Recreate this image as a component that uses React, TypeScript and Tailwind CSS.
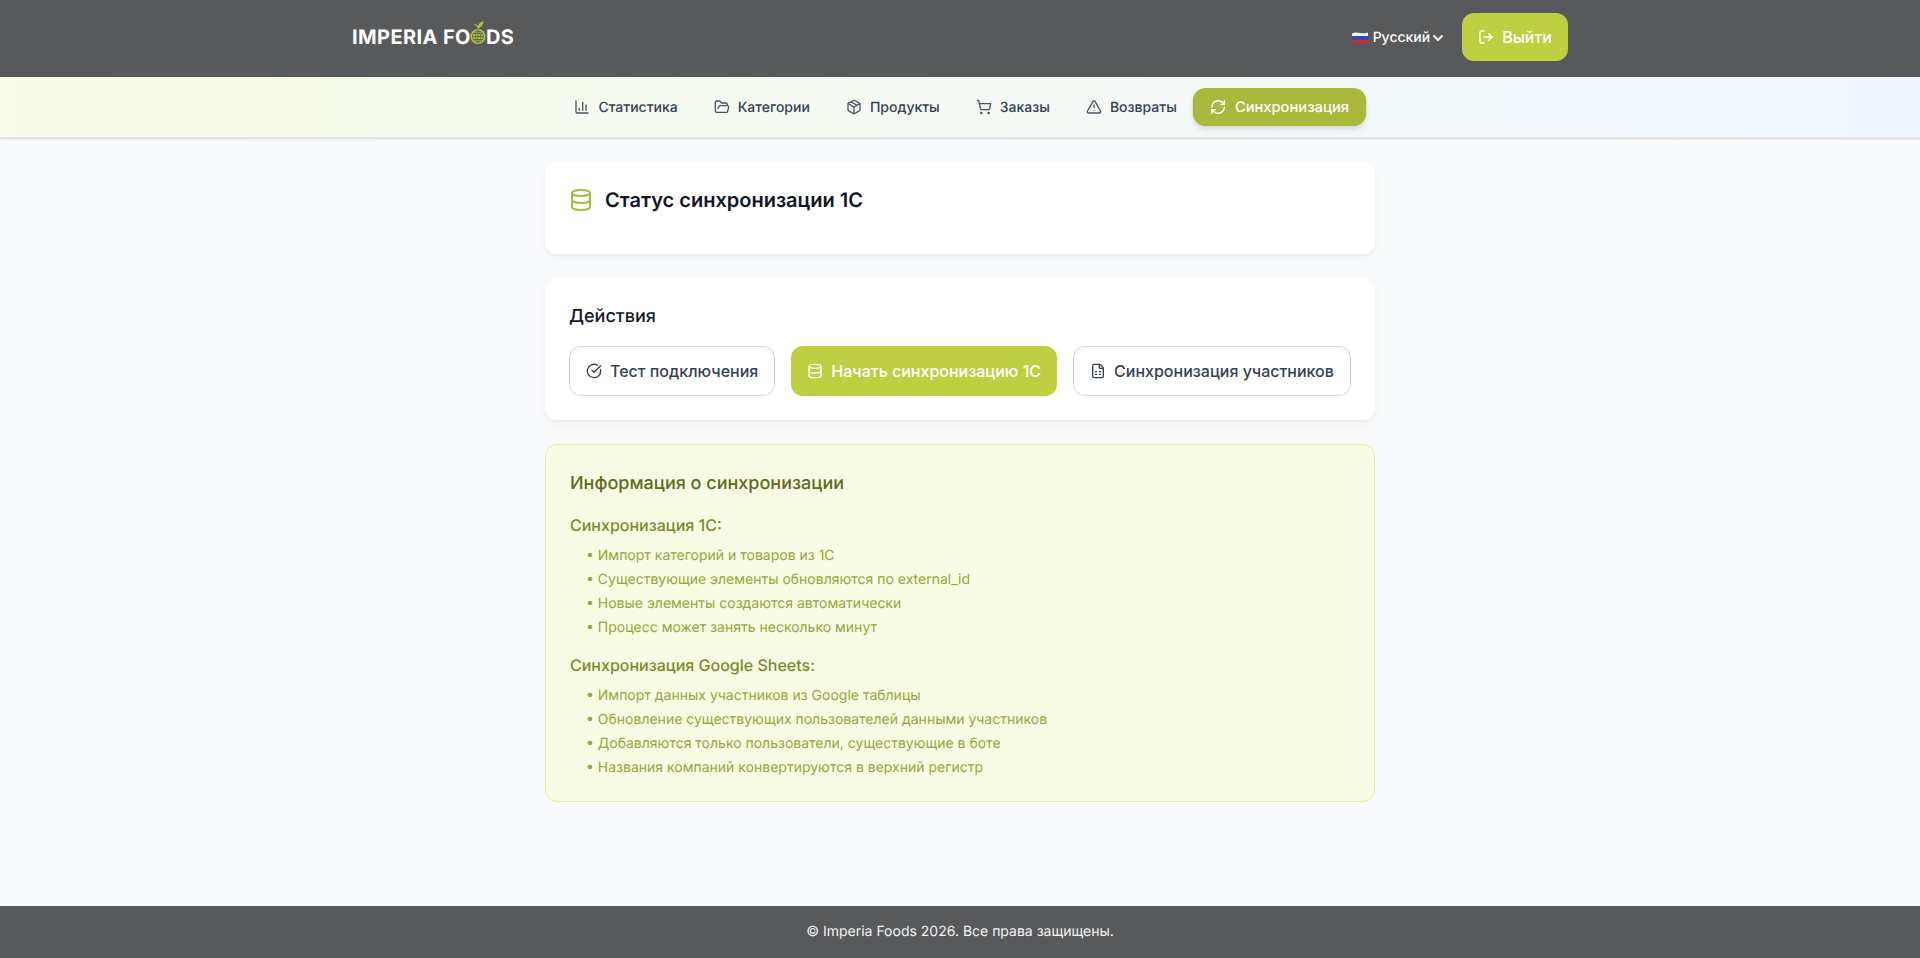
import {
  ChartColumn,
  ChevronDown,
  CircleCheckBig,
  Database,
  FileSpreadsheet,
  FolderOpen,
  LogOut,
  Package,
  RefreshCw,
  ShoppingCart,
  TriangleAlert,
} from 'lucide-react';

const navItems = [
  { label: 'Статистика', icon: ChartColumn },
  { label: 'Категории', icon: FolderOpen },
  { label: 'Продукты', icon: Package },
  { label: 'Заказы', icon: ShoppingCart },
  { label: 'Возвраты', icon: TriangleAlert },
  { label: 'Синхронизация', icon: RefreshCw, active: true },
];

const sync1c = [
  'Импорт категорий и товаров из 1С',
  'Существующие элементы обновляются по external_id',
  'Новые элементы создаются автоматически',
  'Процесс может занять несколько минут',
];

const syncSheets = [
  'Импорт данных участников из Google таблицы',
  'Обновление существующих пользователей данными участников',
  'Добавляются только пользователи, существующие в боте',
  'Названия компаний конвертируются в верхний регистр',
];

function LogoGlobe() {
  return (
    <svg width="16" height="25" viewBox="0 0 16 25" fill="none" className="mx-[-0.5px] mt-[-9px]">
      <path d="M8 9 C7.6 6.6 6 5 3.6 4.4 C5.2 3.8 7.4 4.6 8.2 6.2 C8.8 3.4 10.8 1.6 13.6 1.2 C13.4 4.4 11.4 6.8 8 9 Z" fill="#b5c63c" />
      <circle cx="8" cy="16.5" r="7.6" fill="#b5c63c" />
      <g stroke="#58595b" strokeWidth="0.8">
        <circle cx="8" cy="16.5" r="5.6" />
        <ellipse cx="8" cy="16.5" rx="2.6" ry="5.6" />
        <path d="M8 10.9 V22.1 M2.4 16.5 H13.6 M3.2 13.6 H12.8 M3.2 19.4 H12.8" />
      </g>
    </svg>
  );
}

function RuFlag() {
  return (
    <svg width="16" height="12" viewBox="0 0 16 12" className="shrink-0">
      <path d="M0 1.4 C3 0 5 0.4 8 1 C11 1.6 13 1.2 16 0.4 V4.2 H0 Z" fill="#f3f4f6" />
      <rect x="0" y="4" width="16" height="4" fill="#2b50a8" />
      <path d="M0 8 H16 V10.6 C13 11.6 11 11.8 8 11.2 C5 10.6 3 10.4 0 11.6 Z" fill="#d5283a" />
    </svg>
  );
}

function InfoBlock({ title, items, className }: { title: string; items: string[]; className?: string }) {
  return (
    <div className={className}>
      <h4 className="text-base font-medium text-[#7a8a2a] mb-2">{title}</h4>
      <ul className="ml-4 pt-px -mb-px space-y-1 text-sm text-[#95a63a]">
        {items.map((item) => (
          <li key={item}>• {item}</li>
        ))}
      </ul>
    </div>
  );
}

export default function App() {
  return (
    <div className="min-h-screen flex flex-col bg-[#f9fafb] font-['Inter',sans-serif] text-gray-900 [text-rendering:geometricPrecision]">
      {/* Header */}
      <header className="bg-[#58595b] h-[77px]">
        <div className="max-w-7xl mx-auto px-8 pb-[3px] h-full flex items-center justify-between">
          <div className="flex items-center text-xl font-bold text-white leading-7 tracking-[0.4px]">
            <span>IMPERIA FO</span>
            <LogoGlobe />
            <span>DS</span>
          </div>
          <div className="flex items-center gap-4">
            <div className="flex items-center text-sm font-medium text-white mt-[1px]">
              <RuFlag />
              <span className="ml-[5px]">Русский</span>
              <ChevronDown className="h-4 w-4" strokeWidth={3} />
            </div>
            <button className="flex items-center gap-2 rounded-xl bg-[#bfcf42] px-4 py-3 text-base font-medium text-white">
              <LogOut className="h-4 w-4" />
              Выйти
            </button>
          </div>
        </div>
      </header>

      {/* Nav */}
      <nav className="bg-gradient-to-r from-[#f9fce8] to-[#eff6ff] border-b border-gray-200 shadow-sm">
        <div className="flex justify-center gap-1 py-3">
          {navItems.map((item) => {
            const Icon = item.icon;
            return (
              <a
                key={item.label}
                className={`flex items-center gap-2 rounded-xl px-4 py-2 text-sm font-medium ${
                  item.active ? 'bg-[#aab93c] text-white shadow-md scale-105' : 'text-gray-700'
                }`}
              >
                <Icon className={`h-4 w-4 ${item.active ? '' : 'text-gray-600'}`} />
                <span className="pt-px -mb-px">{item.label}</span>
              </a>
            );
          })}
        </div>
      </nav>

      {/* Content */}
      <main className="flex-1 w-[830px] mx-auto pt-6 pb-6 space-y-6">
        <section className="bg-white rounded-xl shadow-md shadow-gray-200/60 p-6">
          <div className="flex items-center gap-3 mb-4">
            <Database className="h-6 w-6 text-[#aab93c]" />
            <h2 className="text-xl font-semibold leading-7 text-gray-900">Статус синхронизации 1С</h2>
          </div>
        </section>

        <section className="bg-white rounded-xl shadow-md shadow-gray-200/60 p-6">
          <h3 className="text-lg font-medium text-gray-900 pt-px">Действия</h3>
          <div className="flex gap-4 whitespace-nowrap mt-[15px]">
            <button className="flex items-center gap-2 rounded-xl border border-gray-300 bg-white px-4 py-3 text-base font-medium text-gray-700">
              <CircleCheckBig className="h-4 w-4" />
              Тест подключения
            </button>
            <button className="flex items-center gap-2 rounded-xl bg-[#bfcf42] px-4 py-[13px] text-base font-medium text-white">
              <Database className="h-4 w-4" />
              Начать синхронизацию 1С
            </button>
            <button className="flex items-center gap-2 rounded-xl border border-gray-300 bg-white px-4 py-3 text-base font-medium text-gray-700">
              <FileSpreadsheet className="h-4 w-4" />
              Синхронизация участников
            </button>
          </div>
        </section>

        <section className="rounded-xl border border-[#e2f0a0] bg-[#f8fce5] p-6">
          <h3 className="text-lg font-medium text-[#5f6b1f] pt-px">Информация о синхронизации</h3>
          <InfoBlock title="Синхронизация 1С:" items={sync1c} className="mt-[15px]" />
          <InfoBlock title="Синхронизация Google Sheets:" items={syncSheets} className="mt-4" />
        </section>
      </main>

      {/* Footer */}
      <footer className="bg-[#58595b] py-4 text-center text-sm text-gray-100">
        © Imperia Foods 2026. Все права защищены.
      </footer>
    </div>
  );
}
